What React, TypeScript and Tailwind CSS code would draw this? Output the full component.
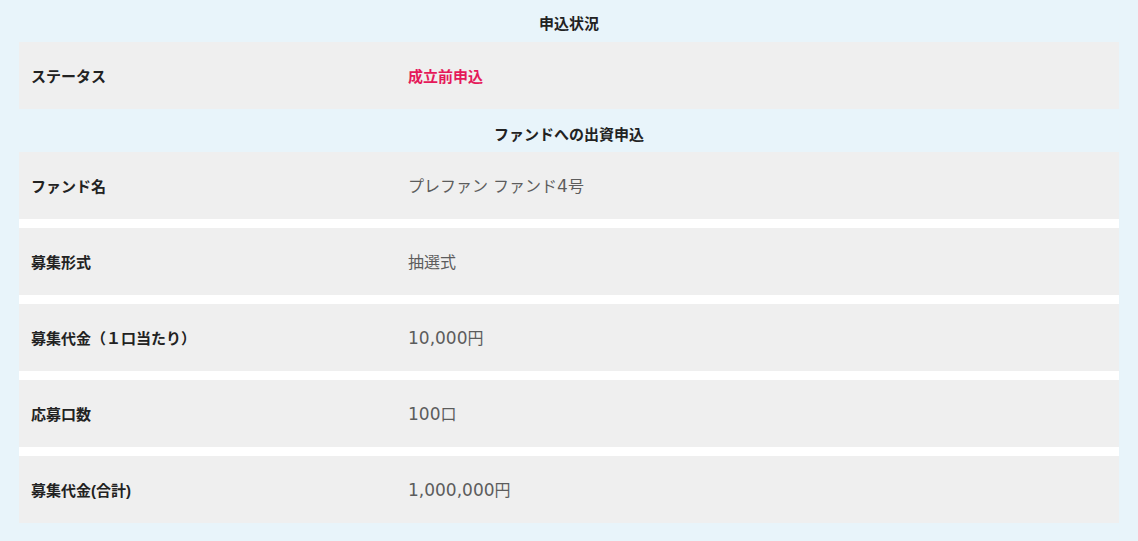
const font = {
  fontFamily: '"Liberation Sans", "Noto Sans CJK JP", sans-serif',
};

type Row = { label: string; value: string; accent?: boolean };

const statusRows: Row[] = [{ label: "ステータス", value: "成立前申込", accent: true }];

const fundRows: Row[] = [
  { label: "ファンド名", value: "プレファン ファンド4号" },
  { label: "募集形式", value: "抽選式" },
  { label: "募集代金（１口当たり）", value: "10,000円" },
  { label: "応募口数", value: "100口" },
  { label: "募集代金(合計)", value: "1,000,000円" },
];

// digits in the value column are set a little bigger, in a wider face
function Value({ text }: { text: string }) {
  const parts = text.split(/([0-9,]+)/);
  return (
    <>
      {parts.map((p, i) =>
        /^[0-9,]+$/.test(p) ? (
          <span
            key={i}
            className="text-[17px]"
            style={{ fontFamily: '"DejaVu Sans", sans-serif' }}
          >
            {p}
          </span>
        ) : (
          <span key={i} style={{ fontFamily: '"DejaVu Sans", "Noto Sans CJK JP", sans-serif' }}>
            {p}
          </span>
        )
      )}
    </>
  );
}

function Section({ title, rows, first }: { title: string; rows: Row[]; first?: boolean }) {
  return (
    <div>
      <h2
        className={`text-center text-[15px] font-bold text-[#222] flex items-center justify-center ${
          first ? "h-[42px] pt-[6px]" : "h-[43px] pt-[10px]"
        }`}
      >
        {title}
      </h2>
      <div className="flex flex-col gap-[9px] bg-white">
        {rows.map((r) => (
          <div
            key={r.label}
            className="grid grid-cols-[389px_1fr] items-center h-[67px] pt-[3px] bg-[#efefef]"
          >
            <div className="pl-3 text-[15px] font-bold text-[#222]">{r.label}</div>
            {r.accent ? (
              <div className="text-[15px] font-bold text-[#e5195a]">{r.value}</div>
            ) : (
              <div className="text-[16px] text-[#5c5c5c]">
                <Value text={r.value} />
              </div>
            )}
          </div>
        ))}
      </div>
    </div>
  );
}

export default function App() {
  return (
    <div className="min-h-screen w-full bg-[#e8f4fa]" style={font}>
      <div className="mx-[19px] w-[1100px]">
        <Section title="申込状況" rows={statusRows} first />
        <Section title="ファンドへの出資申込" rows={fundRows} />
      </div>
    </div>
  );
}
